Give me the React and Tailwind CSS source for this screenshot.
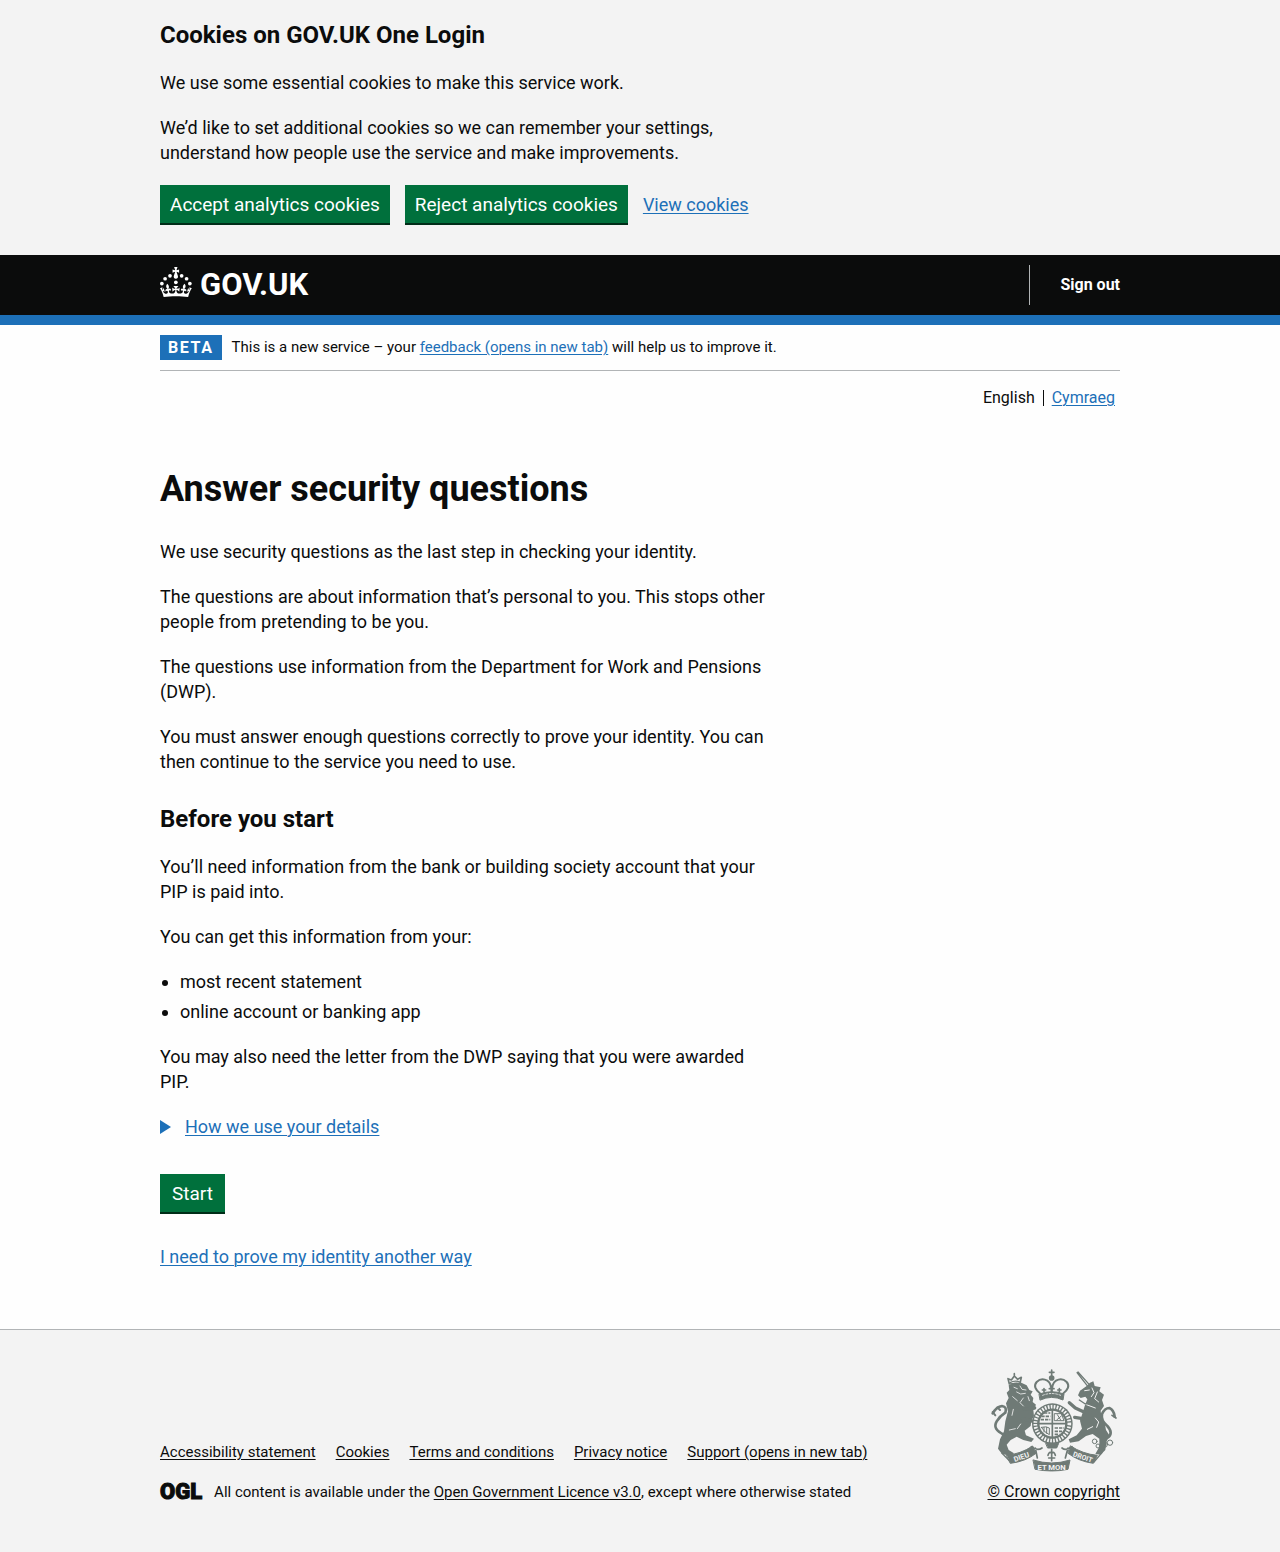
import React from "react";

const LINK = "text-[#1d70b8] underline underline-offset-2 decoration-1";
const FOOTER_LINK = "underline underline-offset-2 decoration-1";
const BUTTON =
  "bg-[#00703c] pt-[8px] pb-[7px] text-[19px] leading-[23px] text-white shadow-[0_2px_0_#002d18] cursor-pointer";

function Crown() {
  return (
    <svg viewBox="0 0 64 60" className="h-[30px] w-8 fill-white" aria-hidden="true">
      <circle cx="20" cy="17.6" r="3.7" />
      <circle cx="10.2" cy="23.5" r="3.7" />
      <circle cx="3.7" cy="33.2" r="3.7" />
      <circle cx="31.7" cy="30.6" r="3.7" />
      <circle cx="43.3" cy="17.6" r="3.7" />
      <circle cx="53.2" cy="23.5" r="3.7" />
      <circle cx="59.7" cy="33.2" r="3.7" />
      <path d="M33.1,9.8c.2-.1.3-.3.5-.5l4.6,2.4v-6.8l-4.6,1.5c-.1-.2-.3-.3-.5-.5l1.9-5.9h-6.7l1.9,5.9c-.2.1-.3.3-.5.5l-4.6-1.5v6.8l4.6-2.4c.1.2.3.3.5.5l-2.6,8c-.9,2.8,1.2,5.7,4.1,5.7h0c3,0,5.1-2.9,4.1-5.7l-2.6-8ZM37,37.9s-3.4,3.8-4.1,6.1c2.2,0,4.2-.5,6.4-2.8l-.7,8.5c-2-2.8-4.4-4.1-5.7-3.8.1,3.1.5,6.7,5.8,7.2,3.7.3,6.7-1.5,7-3.8.4-2.6-2-4.3-3.7-1.6-1.4-4.5,2.4-6.1,4.9-3.2-1.9-4.5-1.8-7.7,2.4-10.9,3,4,2.6,7.3-1.2,11.1,2.4-1.3,6.2,0,4,4.6-1.2-2.8-3.7-2.2-4.2.2-.3,1.7.7,3.7,3,4.2,1.9.3,4.7-.9,7-5.9-1.3,0-2.4.7-3.9,1.7l2.4-8c.6,2.3,1.4,3.7,2.2,4.5.6-1.6.5-2.8,0-5.3l5,1.8c-2.6,3.6-5.2,8.7-7.3,17.5-7.4-1.1-15.7-1.7-24.5-1.7h0c-8.8,0-17.1.6-24.5,1.7-2.1-8.9-4.7-13.9-7.3-17.5l5-1.8c-.5,2.5-.6,3.7,0,5.3.8-.8,1.6-2.3,2.2-4.5l2.4,8c-1.5-1-2.6-1.7-3.9-1.7,2.3,5,5.2,6.2,7,5.9,2.3-.4,3.3-2.4,3-4.2-.5-2.4-3-3.1-4.2-.2-2.2-4.6,1.6-6,4-4.6-3.7-3.7-4.2-7.1-1.2-11.1,4.2,3.2,4.3,6.4,2.4,10.9,2.5-2.8,6.3-1.3,4.9,3.2-1.8-2.7-4.1-1-3.7,1.6.3,2.3,3.3,4.1,7,3.8,5.4-.5,5.7-4.2,5.8-7.2-1.3-.2-3.7,1-5.7,3.8l-.7-8.5c2.2,2.3,4.2,2.7,6.4,2.8-.7-2.3-4.1-6.1-4.1-6.1h10.6Z" />
    </svg>
  );
}

function RoyalArms() {
  const c = "#6f7a76";
  const bg = "#f3f3f3";
  return (
    <svg viewBox="30 26 384 312" className="h-[104px] w-32" fill="none" stroke={c} strokeWidth="5" strokeLinejoin="round" strokeLinecap="round" aria-hidden="true">
      {/* lion */}
      <path fill={c} stroke="none" d="M86 78 L104 70 L124 70 L140 78 L148 92 L158 96 L152 106 L160 116 L158 128 L168 136 L160 152 L162 170 L154 184 L152 200 L134 214 L138 228 L162 238 L154 248 L130 242 L110 232 L92 242 L80 256 L86 272 L102 282 L94 290 L66 284 L54 268 L60 240 L72 216 L76 186 L84 156 L78 132 L86 116 L80 100 L88 92 Z" />
      <path strokeWidth="10" d="M132 150 L164 146 M126 178 L160 186" />
      <path strokeWidth="8" d="M72 226 Q36 210 50 186 Q60 170 76 160 Q82 142 66 140 Q50 142 38 162" />
      <path strokeWidth="6" d="M38 158 L46 168 M52 144 L60 152" />
      <path stroke={bg} strokeWidth="2.5" d="M102 84 L112 88 M120 80 L126 90 L138 92 M110 98 L122 104 L136 102 M98 112 L112 124 M130 116 L120 130 L130 140 M88 212 L106 208 M122 194 L112 208 M144 112 L148 124 M100 150 L96 168" />
      <path strokeWidth="5" d="M88 74 L84 58 L94 62 L103 50 L113 60 L124 54 L120 72 Z M103 48 V43" />
      <path strokeWidth="4" d="M90 70 Q104 62 120 68" />
      {/* unicorn */}
      <path strokeWidth="4" d="M291 40 L324 82 M294 38 L330 78" />
      <path fill={c} stroke="none" d="M300 94 L320 80 L330 70 L340 66 L344 80 L362 84 L358 96 L372 106 L366 122 L372 140 L362 154 L364 172 L374 190 L378 212 L388 228 L380 246 L376 272 L362 286 L346 284 L358 262 L358 238 L338 224 L318 230 L296 246 L270 250 L266 240 L290 228 L306 208 L300 184 L308 160 L314 140 L322 120 L316 112 L302 116 L294 108 Z" />
      <path strokeWidth="10" d="M312 158 L286 146 L268 130 M308 178 L284 174" />
      <path strokeWidth="8" d="M382 236 Q402 222 382 200 Q362 184 366 164 Q374 146 388 146 Q402 152 404 172" />
      <path strokeWidth="5" d="M396 168 L408 176" />
      <path stroke={bg} strokeWidth="3" d="M314 94 L328 92 M336 86 L342 100 L334 112 M352 98 L344 118 L356 128 M314 134 L346 146 M322 210 L338 202 M346 176 L356 188 L350 204" />
      <path strokeWidth="4" d="M298 122 L316 134 L332 130 L346 140 L364 136" />
      <g strokeWidth="3">
        <circle cx="344" cy="246" r="7" /><circle cx="354" cy="260" r="6" />
        <circle cx="374" cy="256" r="8" /><circle cx="390" cy="250" r="8" />
      </g>
      {/* garter and shield */}
      <circle cx="217" cy="193" r="61" fill={c} stroke="none" />
      <circle cx="217" cy="193" r="51" stroke={bg} strokeWidth="11" strokeDasharray="5 4" strokeLinecap="butt" />
      <circle cx="217" cy="193" r="41" strokeWidth="5" fill={bg} />
      <path strokeWidth="5" d="M217 152 V234 M176 193 H258" />
      <path strokeWidth="5" strokeDasharray="10 3" strokeLinecap="butt" d="M184 171 H211 M182 181 H211 M192 161 H211 M224 206 H252 M224 216 H246 M224 225 H238" />
      <path strokeWidth="3" d="M224 163 H244 L252 184 H224 Z M232 166 L242 182 M244 170 L230 182 M184 204 Q200 200 208 206 V226 Q194 220 184 204 M192 204 V218 M200 204 V222" />
      <path fill={c} strokeWidth="3" d="M198 252 H236 L230 266 H204 Z" />
      {/* crown */}
      <path strokeWidth="6" d="M182 104 Q156 84 170 68 Q184 54 202 64 Q215 72 215 100 M248 104 Q274 84 260 68 Q246 54 228 64 Q215 72 215 100" />
      <circle cx="215" cy="56" r="6" fill={c} />
      <path strokeWidth="5" d="M215 32 V50 M208 39 H222" />
      <path fill={c} strokeWidth="3" d="M178 104 Q215 90 252 104 L249 122 Q215 106 181 122 Z" />
      <path strokeWidth="5" d="M192 98 V88 M187 92 H197 M238 98 V88 M233 92 H243 M215 94 V84 M208 88 H222" />
      <path stroke={bg} strokeWidth="2.5" strokeDasharray="5 5" d="M188 108 Q215 97 242 108" />
      {/* motto ribbon */}
      <path strokeWidth="5" d="M154 262 Q172 276 186 266 M276 262 Q258 276 246 266 M166 266 L172 296 M264 266 L256 296" />
      <path strokeWidth="5" d="M215 270 V304 M204 288 Q208 274 215 282 Q222 274 226 288 M206 296 H224" />
      <path fill={c} strokeWidth="3" d="M80 288 Q122 284 158 260 L168 282 Q138 306 92 312 Z M272 260 Q308 284 352 288 L340 312 Q296 306 264 282 Z" />
      <path fill={c} strokeWidth="3" d="M160 302 Q215 320 270 302 L264 330 Q215 340 166 330 Z" />
      <path strokeWidth="4" d="M66 282 L92 308 M366 280 L342 308" />
      <g fill={bg} stroke="none" fontFamily="Roboto, sans-serif" fontWeight="700" textAnchor="middle">
        <text x="127" y="300" fontSize="22" transform="rotate(-19 127 300)">DIEU</text>
        <text x="306" y="300" fontSize="21" transform="rotate(19 306 300)">DROIT</text>
        <text x="215" y="332" fontSize="23">ET MON</text>
      </g>
    </svg>
  );
}

const WRAP = "mx-auto w-full max-w-[960px]";

export default function App() {
  return (
    <div className="flex min-h-screen flex-col bg-[#fefefe] font-['Roboto',sans-serif] text-[18px] leading-[25px] text-[#0b0c0c]">
      <section aria-label="Cookies on GOV.UK One Login" className="bg-[#f3f3f3] pt-5 pb-8">
        <div className={WRAP}>
          <div className="flex max-w-[615px] flex-col gap-5">
            <h2 className="text-[24px] leading-[30px] font-bold">Cookies on GOV.UK One Login</h2>
            <p>We use some essential cookies to make this service work.</p>
            <p>We’d like to set additional cookies so we can remember your settings, understand how people use the service and make improvements.</p>
            <div className="flex items-center gap-[15px]">
              <button type="button" className={`${BUTTON} px-2.5`}>Accept analytics cookies</button>
              <button type="button" className={`${BUTTON} px-2.5`}>Reject analytics cookies</button>
              <a href="#cookies" className={LINK}>View cookies</a>
            </div>
          </div>
        </div>
      </section>

      <header className="border-b-10 border-[#1d70b8] bg-[#0b0c0c] text-white">
        <div className={`${WRAP} flex items-center justify-between py-2.5`}>
          <a href="#home" aria-label="GOV.UK" className="flex items-center gap-2">
            <span className="pb-1.5"><Crown /></span>
            <span className="text-[31px] leading-10 font-bold">GOV.UK</span>
          </a>
          <nav className="border-l border-[#b1b4b6] pl-[30px] leading-10">
            <a href="#sign-out" className="block text-base leading-10 font-bold">Sign out</a>
          </nav>
        </div>
      </header>

      <main className={`${WRAP} grow`}>
        <div className="flex items-center gap-2.5 border-b border-[#b1b4b6] py-2.5 text-[15px] leading-[25px]">
          <strong className="bg-[#1d70b8] px-2 text-base leading-[25px] font-bold tracking-widest text-white">BETA</strong>
          <span>
            This is a new service – your <a href="#feedback" className={LINK}>feedback (opens in new tab)</a> will help us to improve it.
          </span>
        </div>

        <nav aria-label="Language" className="flex items-center justify-end pt-[17px] pr-[5px] text-[16px] leading-5">
          <span className="pr-2">English</span>
          <a href="#cymraeg" className={`${LINK} border-l border-[#0b0c0c] pl-2 leading-4`}>Cymraeg</a>
        </nav>

        <div className="flex max-w-[615px] flex-col items-start gap-5 pt-[61px] pb-[60px]">
          <h1 className="mb-2.5 text-[36px] leading-10 font-bold">Answer security questions</h1>
          <p>We use security questions as the last step in checking your identity.</p>
          <p>The questions are about information that’s personal to you. This stops other people from pretending to be you.</p>
          <p>The questions use information from the Department for Work and Pensions (DWP).</p>
          <p>You must answer enough questions correctly to prove your identity. You can then continue to the service you need to use.</p>
          <h2 className="mt-2.5 text-[24px] leading-[30px] font-bold">Before you start</h2>
          <p>You’ll need information from the bank or building society account that your PIP is paid into.</p>
          <p>You can get this information from your:</p>
          <ul className="flex list-disc flex-col gap-[5px] pl-5">
            <li>most recent statement</li>
            <li>online account or banking app</li>
          </ul>
          <p>You may also need the letter from the DWP saying that you were awarded PIP.</p>
          <details className="text-[#1d70b8]">
            <summary className="flex cursor-pointer list-none items-center gap-3.5">
              <svg viewBox="0 0 11 14" className="h-3.5 w-[11px] fill-[#1d70b8]" aria-hidden="true"><path d="M0 0 L11 7 L0 14 Z" /></svg>
              <span className="underline decoration-1 underline-offset-2">How we use your details</span>
            </summary>
          </details>
          <button type="button" className={`${BUTTON} mt-[15px] mb-3 px-3`}>Start</button>
          <a href="#another-way" className={LINK}>I need to prove my identity another way</a>
        </div>
      </main>

      <footer className="border-t border-[#b1b4b6] bg-[#f3f3f3] pt-[38px] pb-[50px] text-[15px] leading-5">
        <div className={`${WRAP} flex items-end justify-between`}>
          <div className="flex flex-col gap-5">
            <ul className="flex gap-5">
              <li><a href="#accessibility" className={FOOTER_LINK}>Accessibility statement</a></li>
              <li><a href="#cookies" className={FOOTER_LINK}>Cookies</a></li>
              <li><a href="#terms" className={FOOTER_LINK}>Terms and conditions</a></li>
              <li><a href="#privacy" className={FOOTER_LINK}>Privacy notice</a></li>
              <li><a href="#support" className={FOOTER_LINK}>Support (opens in new tab)</a></li>
            </ul>
            <div className="flex items-center gap-3">
              <span className="text-[22px] leading-5 font-black [-webkit-text-stroke:1px_#0b0c0c]">OGL</span>
              <span>
                All content is available under the <a href="#licence" className={FOOTER_LINK}>Open Government Licence v3.0</a>, except where otherwise stated
              </span>
            </div>
          </div>
          <a href="#copyright" className={`${FOOTER_LINK} flex flex-col items-center gap-2.5 text-base leading-5`}>
            <RoyalArms />
            <span>© Crown copyright</span>
          </a>
        </div>
      </footer>
    </div>
  );
}
